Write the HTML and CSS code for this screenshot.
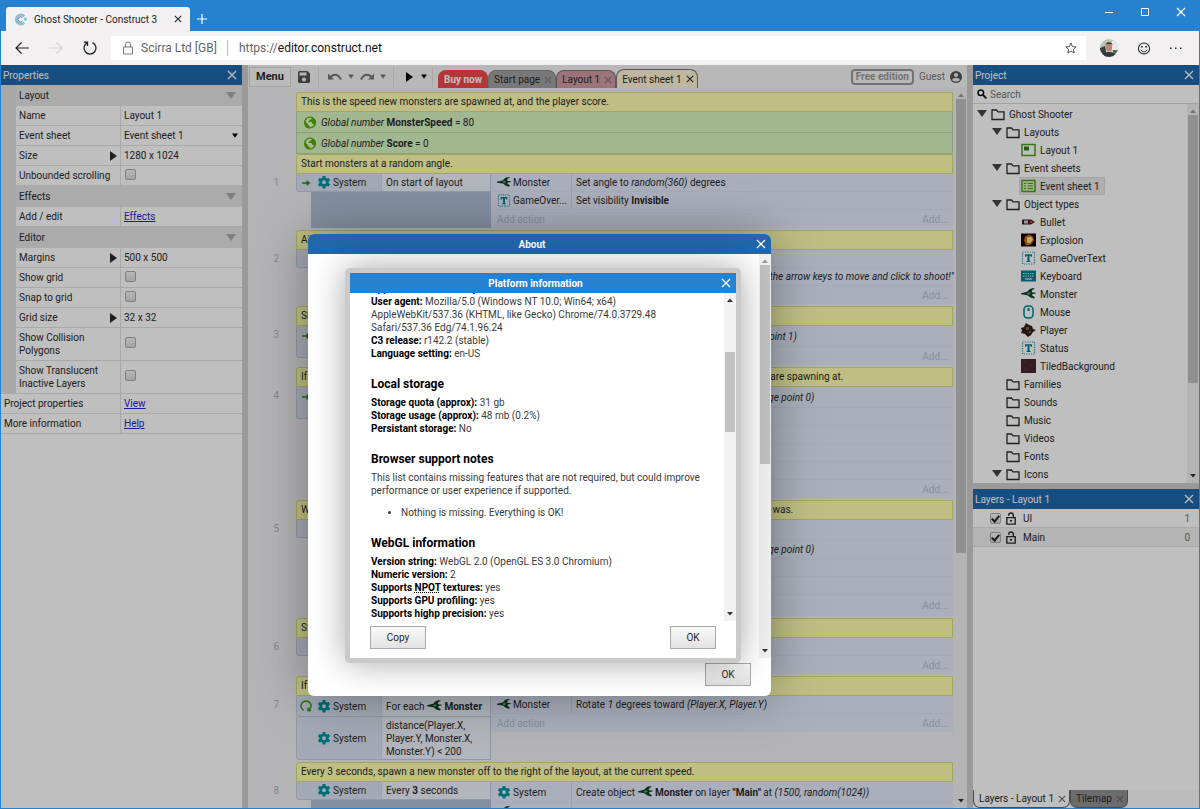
FILE: index.html
```html
<!DOCTYPE html>
<html lang="en">
<head>
  <meta charset="UTF-8" />
  <meta name="viewport" content="width=device-width, initial-scale=1.0" />
  <title>Ghost Shooter - Construct 3</title>
  <link rel="stylesheet" href="styles.css">
</head>

<body>

  <!-- Icon sprites -->
  <svg class="sprites" aria-hidden="true">
    <symbol id="i-x" viewBox="0 0 10 10"><path d="M1 1l8 8M9 1l-8 8" stroke="currentColor" stroke-width="1.3" fill="none"/></symbol>
    <symbol id="i-up" viewBox="0 0 8 8"><path d="M1 6l3-3.5L7 6z" fill="currentColor"/></symbol>
    <symbol id="i-down" viewBox="0 0 8 8"><path d="M1 2l3 3.5L7 2z" fill="currentColor"/></symbol>
    <symbol id="i-tri" viewBox="0 0 10 10"><path d="M0 1h10L5 8z" fill="currentColor"/></symbol>
    <symbol id="i-right" viewBox="0 0 10 10"><path d="M2 0v10l7-5z" fill="currentColor"/></symbol>
    <symbol id="i-gear" viewBox="0 0 24 24"><path fill="#00939f" fill-rule="evenodd" d="M9.500 0h5l.6 3.400 2.300 1.300 3.300-1.200 2.500 4.400-2.700 2.200v2.800l2.700 2.200-2.500 4.400-3.300-1.200-2.300 1.300-.6 3.400h-5l-.6-3.400-2.300-1.300-3.300 1.200L.8 15.100l2.700-2.200v-2.800L.8 7.900l2.500-4.400 3.300 1.200 2.300-1.300zM12 7.800a3.700 3.700 0 1 0 0 7.400 3.700 3.700 0 0 0 0-7.400z"/></symbol>
    <symbol id="i-text" viewBox="0 0 14 14"><rect x="1" y="1" width="12" height="12" fill="none" stroke="#2b94a8" stroke-width="1.2" stroke-dasharray="1.2 1.2"/><path d="M3.500 3.200h7v2.600H9.400L9 4.800H8v5l1 .3v.9H5v-.9l1-.3v-5H5l-.4 1H3.500z" fill="#00808f"/></symbol>
    <symbol id="i-monster" viewBox="0 0 15 12"><path d="M0 5.200L6 3.800l3-2.800 3-1 2 1-2.500.8-.8 1.700 1 1h2.800v1l-2.800.5-.8 1.200 3 2-1 1.300-3.500-1-3-2.300-6.400-1z" fill="#123f24"/><path d="M6 5l2.500-.8 1.300 1.300-1.600 1.300-2.200-.6z" fill="#4aa866"/></symbol>
    <symbol id="i-globe" viewBox="0 0 24 24"><circle cx="12" cy="12" r="10" fill="#e2f8cc" stroke="#54ad00" stroke-width="2.500"/><path fill="#54ad00" d="M2.500 9l6 6v2l3 2v4C5 22.500 1 17 2.500 9zM15 2.500V5l-2 2h-2v2H9v2h6l1 3.500h2.500l1.500 3C24 13 23.500 5 15 2.500z"/></symbol>
    <symbol id="i-arrow" viewBox="0 0 12 10"><path d="M2 5h6" stroke="#2e8c14" stroke-width="1.500"/><path d="M6.500 2L10.500 5l-4 3z" fill="#2e8c14"/></symbol>
    <symbol id="i-loop" viewBox="0 0 12 12"><path d="M3.600 10.300A5 5 0 1 1 8.400 10.300M8 7.500v3h3" fill="none" stroke="#2e9a14" stroke-width="1.500"/></symbol>
    <symbol id="i-folder" viewBox="0 0 14 12"><path d="M1 1.500h4.500l1.500 1.800h6v7.700H1z" fill="none" stroke="currentColor" stroke-width="1.300"/></symbol>
    <symbol id="i-lock" viewBox="0 0 12 14"><path d="M1.500 6h9v7h-9zM3.500 4V3.500a2.500 2.500 0 0 1 5 0V6" fill="none" stroke="currentColor" stroke-width="1.500"/><circle cx="6" cy="9.500" r="1.200" fill="currentColor"/></symbol>
  </svg>

  <!-- Browser title bar -->
  <header class="titlebar">
    <div class="browser-tab">
      <svg class="fav" viewBox="0 0 14 14"><path d="M11 3.500A5 5 0 1 0 11 10.500" fill="none" stroke="#8bbfd8" stroke-width="3"/><path d="M9 5a2.800 2.800 0 1 0 0 4" fill="none" stroke="#56718a" stroke-width="1"/><path d="M11 5h2.500v3H11z" fill="#4fd0d8"/></svg>
      <span>Ghost Shooter - Construct 3</span>
      <button class="icon-btn" aria-label="Close tab"><svg class="ic8"><use href="#i-x"/></svg></button>
    </div>
    <button class="icon-btn new-tab" aria-label="New tab"><svg viewBox="0 0 12 12"><path d="M6 1v10M1 6h10" stroke="currentColor" stroke-width="1.200"/></svg></button>
    <div class="window-btns">
      <button class="icon-btn" aria-label="Minimise"><svg class="ic10" viewBox="0 0 10 10"><path d="M1 5.500h8" stroke="currentColor"/></svg></button>
      <button class="icon-btn" aria-label="Maximise"><svg class="ic10" viewBox="0 0 10 10"><path d="M1.500 1.500h7v7h-7z" fill="none" stroke="currentColor"/></svg></button>
      <button class="icon-btn" aria-label="Close"><svg class="ic10"><use href="#i-x"/></svg></button>
    </div>
  </header>

  <!-- Address bar -->
  <nav class="navbar">
    <div class="nav-btns">
      <button class="icon-btn" aria-label="Back"><svg viewBox="0 0 16 16"><path d="M15 8H2M7.500 2.500L2 8l5.500 5.500" fill="none" stroke="#222" stroke-width="1.200"/></svg></button>
      <button class="icon-btn" aria-label="Forward"><svg viewBox="0 0 16 16"><path d="M1 8h13M8.500 2.500L14 8l-5.500 5.500" fill="none" stroke="#d3d1d1" stroke-width="1.200"/></svg></button>
      <button class="icon-btn" aria-label="Reload"><svg viewBox="0 0 16 16"><path d="M10.500 2.600a6 6 0 1 1-5 0M5.500 6V2.200H2" fill="none" stroke="#222" stroke-width="1.300"/></svg></button>
    </div>
    <div class="address">
      <svg class="padlock" viewBox="0 0 12 14"><path d="M1.500 6h9v7h-9zM3.500 6V3.500a2.500 2.500 0 0 1 5 0V6" fill="none" stroke="#777" stroke-width="1"/></svg>
      <span class="owner">Scirra Ltd [GB]</span>
      <label class="scheme" for="url">https://</label>
      <input id="url" type="text" value="editor.construct.net">
      <button class="icon-btn" aria-label="Favourite"><svg class="ic12" viewBox="0 0 24 24"><path d="M12 2l3 7.200 7.500.6-5.800 4.900 1.800 7.400L12 18l-6.500 4.100 1.800-7.400L1.500 9.800 9 9.200z" fill="none" stroke="#444" stroke-width="1.800"/></svg></button>
    </div>
    <div class="nav-user">
      <svg class="avatar" viewBox="0 0 18 18"><clipPath id="round"><circle cx="9" cy="9" r="9"/></clipPath><g clip-path="url(#round)"><path fill="#b9c6b5" d="M0 0h18v18H0z"/><path fill="#3a4038" d="M0 9l5-2 2 11H0z"/><path fill="#e9e9e6" d="M12 2h6v9h-6z"/><path fill="#5b6a58" d="M13 11h5v7h-5z"/><path fill="#30353d" d="M3 18c0-4 3-5 6-5s6 1 6 5z"/><ellipse cx="9" cy="8" rx="3" ry="4.300" fill="#bd8672"/><path fill="#3b2a20" d="M5.500 7C5 2 13 2 12.500 7l-1-2h-5z"/></g></svg>
      <button class="icon-btn" aria-label="Feedback"><svg class="ic14" viewBox="0 0 14 14"><circle cx="7" cy="7" r="6" fill="none" stroke="#222" stroke-width="1.100"/><path d="M3.800 8.300a3.400 3.400 0 0 0 6.400 0" fill="none" stroke="#222"/><circle cx="4.800" cy="5.200" r=".9"/><circle cx="9.200" cy="5.200" r=".9"/></svg></button>
      <button class="icon-btn" aria-label="More"><svg class="ic12" viewBox="0 0 12 12"><path d="M0 5.500h1.500V7H0zM5 5.500h1.500V7H5zM10 5.500h1.500V7H10z" fill="#222"/></svg></button>
    </div>
  </nav>

  <!-- Editor -->
  <main class="app">

    <!-- Properties -->
    <aside class="props">
      <div class="bar"><span>Properties</span><button class="icon-btn" aria-label="Close Properties"><svg class="ic10"><use href="#i-x"/></svg></button></div>
      <div class="prop-list">
        <div class="group"><span>Layout</span><svg class="ic10"><use href="#i-tri"/></svg></div>
        <div class="prop"><span class="key">Name</span><span class="val">Layout 1</span></div>
        <div class="prop"><label class="key" for="sheet">Event sheet</label><span class="val"><select id="sheet"><option>Event sheet 1</option></select><svg class="caret"><use href="#i-tri"/></svg></span></div>
        <div class="prop"><span class="key">Size<svg class="ic10"><use href="#i-right"/></svg></span><span class="val">1280 x 1024</span></div>
        <div class="prop"><label class="key" for="unb">Unbounded scrolling</label><span class="val"><input type="checkbox" id="unb"></span></div>
        <div class="group"><span>Effects</span><svg class="ic10"><use href="#i-tri"/></svg></div>
        <div class="prop"><span class="key">Add / edit</span><span class="val"><a href="#">Effects</a></span></div>
        <div class="group"><span>Editor</span><svg class="ic10"><use href="#i-tri"/></svg></div>
        <div class="prop"><span class="key">Margins<svg class="ic10"><use href="#i-right"/></svg></span><span class="val">500 x 500</span></div>
        <div class="prop"><label class="key" for="grid">Show grid</label><span class="val"><input type="checkbox" id="grid"></span></div>
        <div class="prop"><label class="key" for="snap">Snap to grid</label><span class="val"><input type="checkbox" id="snap"></span></div>
        <div class="prop"><span class="key">Grid size<svg class="ic10"><use href="#i-right"/></svg></span><span class="val">32 x 32</span></div>
        <div class="prop tall"><label class="key" for="coll">Show Collision<br>Polygons</label><span class="val"><input type="checkbox" id="coll"></span></div>
        <div class="prop tall"><label class="key" for="trans">Show Translucent<br>Inactive Layers</label><span class="val"><input type="checkbox" id="trans"></span></div>
      </div>
      <div class="prop root"><span class="key">Project properties</span><span class="val"><a href="#">View</a></span></div>
      <div class="prop root"><span class="key">More information</span><span class="val"><a href="#">Help</a></span></div>
    </aside>

    <!-- Event sheet -->
    <section class="editor">
      <div class="toolbar">
        <button class="menu">Menu</button>
        <button class="icon-btn save" aria-label="Save"><svg class="ic12" viewBox="0 0 12 12"><path fill="currentColor" fill-rule="evenodd" d="M0 1l1-1h8.500L12 2.500V11l-1 1H1l-1-1zM1.500 1.500v3h7v-3zM6 6.500a2 2 0 1 0 0 4 2 2 0 0 0 0-4z"/></svg></button>
        <div class="history">
          <button class="icon-btn" aria-label="Undo"><svg class="ic14" viewBox="0 0 14 10"><path d="M2.500 6C5 2 10 2 13 8" fill="none" stroke="currentColor" stroke-width="2"/><path d="M0 2v6h6z" fill="currentColor"/></svg></button>
          <button class="icon-btn" aria-label="Undo list"><svg class="ic6"><use href="#i-tri"/></svg></button>
          <button class="icon-btn" aria-label="Redo"><svg class="ic14" viewBox="0 0 14 10"><path d="M11.500 6C9 2 4 2 1 8" fill="none" stroke="currentColor" stroke-width="2"/><path d="M14 2v6H8z" fill="currentColor"/></svg></button>
          <button class="icon-btn" aria-label="Redo list"><svg class="ic6"><use href="#i-tri"/></svg></button>
        </div>
        <div class="play">
          <button class="icon-btn" aria-label="Preview"><svg class="ic10"><use href="#i-right"/></svg></button>
          <button class="icon-btn" aria-label="Preview list"><svg class="ic6"><use href="#i-tri"/></svg></button>
        </div>
        <div class="tabs">
          <button class="tab buy">Buy now</button>
          <button class="tab start">Start page<svg class="ic8"><use href="#i-x"/></svg></button>
          <button class="tab layout">Layout 1<svg class="ic8"><use href="#i-x"/></svg></button>
          <button class="tab sheet">Event sheet 1<svg class="ic8"><use href="#i-x"/></svg></button>
        </div>
        <div class="account">
          <span class="edition">Free edition</span><span>Guest</span>
          <svg class="ic12" viewBox="0 0 12 12"><circle cx="6" cy="6" r="6" fill="#555"/><circle cx="6" cy="4" r="2" fill="#eee"/><path d="M2 9c1-3 7-3 8 0-2 2.200-6 2.200-8 0z" fill="#eee"/></svg>
        </div>
      </div>

      <div class="sheet-wrap">
        <div class="events">
          <div class="comment">This is the speed new monsters are spawned at, and the player score.</div>
          <div class="global"><svg class="ic14"><use href="#i-globe"/></svg><span><i>Global number</i> <b>MonsterSpeed</b> = 80</span></div>
          <div class="global"><svg class="ic14"><use href="#i-globe"/></svg><span><i>Global number</i> <b>Score</b> = 0</span></div>

          <div class="comment">Start monsters at a random angle.</div>
          <div class="event">
            <span class="num">1</span>
            <div class="conds">
              <div class="cond"><span class="obj"><svg class="trig"><use href="#i-arrow"/></svg><svg class="ic14"><use href="#i-gear"/></svg>System</span><span class="txt">On start of layout</span></div>
              <div class="fill"></div>
            </div>
            <div class="acts">
              <div class="act"><span class="obj"><svg class="ic14"><use href="#i-monster"/></svg>Monster</span><span class="txt">Set angle to <i>random(360)</i> degrees</span></div>
              <div class="act"><span class="obj"><svg class="ic14"><use href="#i-text"/></svg>GameOver...</span><span class="txt">Set visibility <b>Invisible</b></span></div>
              <div class="add"><span>Add action</span><span>Add...</span></div>
            </div>
          </div>

          <div class="comment">Aim.</div>
          <div class="event">
            <span class="num">2</span>
            <div class="conds">
              <div class="cond"><span class="obj"></span><span class="txt"></span></div>
              <div class="fill"></div>
            </div>
            <div class="acts">
              <div class="act"><span class="obj"></span><span class="txt"></span></div>
              <div class="act"><span class="obj"></span><span class="txt">Set text to <i>"Score " &amp; Score &amp; newline &amp; "Use the arrow keys to move and click to shoot!"</i></span></div>
              <div class="add"><span></span><span>Add...</span></div>
            </div>
          </div>

          <div class="comment">Shoot.</div>
          <div class="event">
            <span class="num">3</span>
            <div class="conds">
              <div class="cond tail"><span class="obj"><svg class="trig"><use href="#i-arrow"/></svg></span><span class="txt"></span></div>
            </div>
            <div class="acts">
              <div class="act big"><span class="obj"></span><span class="txt">Spawn <b>Bullet</b> on layer <b>"Main"</b> <i>(using image point 1)</i></span></div>
              <div class="add"><span></span><span>Add...</span></div>
            </div>
          </div>

          <div class="comment">If a bullet hits a monster, destroy the bullet, spawn an explosion, add to score and increase the speed they are spawning at.</div>
          <div class="event">
            <span class="num">4</span>
            <div class="conds">
              <div class="cond tail"><span class="obj"><svg class="trig"><use href="#i-arrow"/></svg></span><span class="txt"></span></div>
              <div class="fill"></div>
            </div>
            <div class="acts">
              <div class="act big"><span class="obj"></span><span class="txt">Spawn <b>Explosion</b> on layer <b>"Main"</b> <i>(using image point 0)</i></span></div>
              <div class="act"><span class="obj"></span><span class="txt"></span></div>
              <div class="act"><span class="obj"></span><span class="txt"></span></div>
              <div class="act"><span class="obj"></span><span class="txt"></span></div>
              <div class="act"><span class="obj"></span><span class="txt"></span></div>
              <div class="add"><span></span><span>Add...</span></div>
            </div>
          </div>

          <div class="comment">When the player is hit by a monster, show the game over text where the player was on screen, state what it was.</div>
          <div class="event">
            <span class="num">5</span>
            <div class="conds">
              <div class="cond"><span class="obj"></span><span class="txt"></span></div>
              <div class="fill"></div>
            </div>
            <div class="acts">
              <div class="act big"><span class="obj"></span><span class="txt"></span></div>
              <div class="act"><span class="obj"></span><span class="txt">Spawn <b>Explosion</b> on layer <b>"Main"</b> <i>(using image point 0)</i></span></div>
              <div class="act"><span class="obj"></span><span class="txt"></span></div>
              <div class="act"><span class="obj"></span><span class="txt"></span></div>
              <div class="add big"><span></span><span>Add...</span></div>
            </div>
          </div>

          <div class="comment">Steer.</div>
          <div class="event">
            <span class="num">6</span>
            <div class="conds">
              <div class="cond"><span class="obj"></span><span class="txt"></span></div>
              <div class="fill"></div>
            </div>
            <div class="acts">
              <div class="act"><span class="obj"></span><span class="txt"></span></div>
              <div class="add"><span></span><span>Add...</span></div>
            </div>
          </div>

          <div class="comment">If near, turn.</div>
          <div class="event">
            <span class="num">7</span>
            <div class="conds">
              <div class="cond big"><span class="obj"><svg class="trig"><use href="#i-loop"/></svg><svg class="ic14"><use href="#i-gear"/></svg>System</span><span class="txt">For each <svg class="inline"><use href="#i-monster"/></svg> <b>Monster</b></span></div>
              <div class="cond multi"><span class="obj"><svg class="trig"></svg><svg class="ic14"><use href="#i-gear"/></svg>System</span><span class="txt">distance(Player.X,<br>Player.Y, Monster.X,<br>Monster.Y) &lt; 200</span></div>
            </div>
            <div class="acts">
              <div class="act"><span class="obj"><svg class="ic14"><use href="#i-monster"/></svg>Monster</span><span class="txt">Rotate <i>1</i> degrees toward <i>(Player.X, Player.Y)</i></span></div>
              <div class="add"><span>Add action</span><span>Add...</span></div>
            </div>
          </div>

          <div class="comment">Every 3 seconds, spawn a new monster off to the right of the layout, at the current speed.</div>
          <div class="event">
            <span class="num">8</span>
            <div class="conds">
              <div class="cond"><span class="obj"><svg class="trig"></svg><svg class="ic14"><use href="#i-gear"/></svg>System</span><span class="txt">Every <b>3</b> seconds</span></div>
              <div class="fill"></div>
            </div>
            <div class="acts">
              <div class="act big"><span class="obj"><svg class="ic14"><use href="#i-gear"/></svg>System</span><span class="txt">Create object <svg class="inline"><use href="#i-monster"/></svg> <b>Monster</b> on layer <b>"Main"</b> at <i>(1500, random(1024))</i></span></div>
              <div class="act"><span class="obj"><svg class="ic14"><use href="#i-monster"/></svg></span><span class="txt"></span></div>
            </div>
          </div>
        </div>
        <div class="scrollbar"><svg class="ic8 off"><use href="#i-up"/></svg><div class="track"><div class="thumb sheet-thumb"></div></div><svg class="ic8"><use href="#i-down"/></svg></div>
      </div>
    </section>

    <!-- Project and layers -->
    <aside class="right">
      <div class="bar"><span>Project</span><button class="icon-btn" aria-label="Close Project"><svg class="ic10"><use href="#i-x"/></svg></button></div>
      <div class="search">
        <label for="q" aria-label="Search"><svg class="ic10" viewBox="0 0 10 10"><circle cx="3.800" cy="3.800" r="2.800" fill="none" stroke="#111" stroke-width="1.500"/><path d="M6 6l3.500 3.500" stroke="#111" stroke-width="1.800"/></svg></label>
        <input id="q" type="text" placeholder="Search">
      </div>
      <div class="tree-wrap">
        <ul class="tree">
          <li><svg class="ic10"><use href="#i-tri"/></svg><svg class="ic14"><use href="#i-folder"/></svg>Ghost Shooter</li>
          <li class="l1"><svg class="ic10"><use href="#i-tri"/></svg><svg class="ic14"><use href="#i-folder"/></svg>Layouts</li>
          <li class="l2"><svg class="ic15" viewBox="0 0 15 13"><path d="M1 1h13v11H1z" fill="none" stroke="#4f9a20" stroke-width="1.500"/><path d="M3 3h5v4H3z" fill="#347a18"/></svg>Layout 1</li>
          <li class="l1"><svg class="ic10"><use href="#i-tri"/></svg><svg class="ic14"><use href="#i-folder"/></svg>Event sheets</li>
          <li class="l2 active"><svg class="ic15" viewBox="0 0 15 13"><path d="M1 1h13v11H1z" fill="#d5efb8" stroke="#4f9a20" stroke-width="1.500"/><path d="M3 4h2M3 6.500h2M3 9h2M6.500 4H12M6.500 6.500H12M6.500 9H12" stroke="#4f9a20" stroke-width="1.200"/></svg>Event sheet 1</li>
          <li class="l1"><svg class="ic10"><use href="#i-tri"/></svg><svg class="ic14"><use href="#i-folder"/></svg>Object types</li>
          <li class="l2"><svg class="ic15" viewBox="0 0 15 13"><path d="M1 4h9l4 2.500L10 9H1z" fill="#3b2222"/><path d="M3 5h4v3H3z" fill="#c9c9c9"/><path d="M9 5l3 1.500L9 8z" fill="#d8502a"/></svg>Bullet</li>
          <li class="l2"><svg class="ic15" viewBox="0 0 15 13"><path d="M0 0h15v13H0z" fill="#120600"/><path d="M3 7l1-4 4-2 4 2 1 4-3 4-5 1z" fill="#c4690f"/><path d="M6 4l4-1 2 3-3 4-3-1z" fill="#ffdf8c"/></svg>Explosion</li>
          <li class="l2"><svg class="ic15"><use href="#i-text"/></svg>GameOverText</li>
          <li class="l2"><svg class="ic15" viewBox="0 0 15 13"><path d="M0 1h15v11H0z" fill="#00808f"/><path d="M2 4h11M2 6.500h11" stroke="#cdeef2" stroke-width="1.200" stroke-dasharray="1.300 1"/><path d="M4 9.500h7" stroke="#cdeef2" stroke-width="1.200"/></svg>Keyboard</li>
          <li class="l2"><svg class="ic15"><use href="#i-monster"/></svg>Monster</li>
          <li class="l2"><svg class="ic15" viewBox="0 0 15 14"><rect x="3" y="1" width="9" height="12" rx="3.500" fill="none" stroke="#00808f" stroke-width="1.500"/><path d="M7.500 3v3" stroke="#00808f" stroke-width="2"/></svg>Mouse</li>
          <li class="l2"><svg class="ic15" viewBox="0 0 15 14"><path d="M0 5l3-1 2-4 3 2 3 1 1 3 3 1-3 2-2 3-3 2-3-3-4-1 1-2z" fill="#33201a"/><path d="M5 4h3v3H5zM8 8h2v2H8z" fill="#8a5a48"/></svg>Player</li>
          <li class="l2"><svg class="ic15"><use href="#i-text"/></svg>Status</li>
          <li class="l2"><svg class="ic15" viewBox="0 0 15 14"><path d="M0 0h15v14H0z" fill="#47262f"/><path d="M2 3h3M8 6h4M3 11h5" stroke="#5b343d"/></svg>TiledBackground</li>
          <li class="l1"><svg class="ic10"></svg><svg class="ic14"><use href="#i-folder"/></svg>Families</li>
          <li class="l1"><svg class="ic10"></svg><svg class="ic14"><use href="#i-folder"/></svg>Sounds</li>
          <li class="l1"><svg class="ic10"></svg><svg class="ic14"><use href="#i-folder"/></svg>Music</li>
          <li class="l1"><svg class="ic10"></svg><svg class="ic14"><use href="#i-folder"/></svg>Videos</li>
          <li class="l1"><svg class="ic10"></svg><svg class="ic14"><use href="#i-folder"/></svg>Fonts</li>
          <li class="l1"><svg class="ic10"><use href="#i-tri"/></svg><svg class="ic14"><use href="#i-folder"/></svg>Icons</li>
        </ul>
        <div class="scrollbar"><svg class="ic8 off"><use href="#i-up"/></svg><div class="track"><div class="thumb tree-thumb"></div></div><svg class="ic8"><use href="#i-down"/></svg></div>
      </div>
      <div class="split"></div>
      <div class="bar"><span>Layers - Layout 1</span><button class="icon-btn" aria-label="Close Layers"><svg class="ic10"><use href="#i-x"/></svg></button></div>
      <div class="layer"><input type="checkbox" id="ui" checked><svg class="ic14"><use href="#i-lock"/></svg><label for="ui">UI</label><span>1</span></div>
      <div class="layer alt"><input type="checkbox" id="main" checked><svg class="ic14"><use href="#i-lock"/></svg><label for="main">Main</label><span>0</span></div>
      <div class="dock-tabs">
        <button class="dock on">Layers - Layout 1<svg class="ic8"><use href="#i-x"/></svg></button>
        <button class="dock">Tilemap<svg class="ic8"><use href="#i-x"/></svg></button>
      </div>
    </aside>

    <div class="backdrop"></div>

    <!-- About dialog -->
    <div class="about" role="dialog" aria-label="About">
      <div class="bar dlg"><span>About</span><button class="icon-btn" aria-label="Close About"><svg class="ic10"><use href="#i-x"/></svg></button></div>
      <div class="about-body">
        <div class="scrollbar"><svg class="ic8 off"><use href="#i-up"/></svg><div class="track"><div class="thumb about-thumb"></div></div><svg class="ic8"><use href="#i-down"/></svg></div>
      </div>
      <div class="about-foot"><button class="btn">OK</button></div>

      <!-- Platform information dialog -->
      <div class="platform" role="dialog" aria-label="Platform information">
        <div class="bar dlg"><span>Platform information</span><button class="icon-btn" aria-label="Close Platform information"><svg class="ic10"><use href="#i-x"/></svg></button></div>
        <div class="platform-body">
          <div class="info">
            <p class="scrolled"><b>Approx. device memory:</b></p>
            <p><b>User agent:</b> Mozilla/5.0 (Windows NT 10.0; Win64; x64)<br>AppleWebKit/537.36 (KHTML, like Gecko) Chrome/74.0.3729.48<br>Safari/537.36 Edg/74.1.96.24</p>
            <p><b>C3 release:</b> r142.2 (stable)</p>
            <p><b>Language setting:</b> en-US</p>
            <h2>Local storage</h2>
            <p><b>Storage quota (approx):</b> 31 gb</p>
            <p><b>Storage usage (approx):</b> 48 mb (0.2%)</p>
            <p><b>Persistant storage:</b> No</p>
            <h2>Browser support notes</h2>
            <p>This list contains missing features that are not required, but could improve<br>performance or user experience if supported.</p>
            <ul><li>Nothing is missing. Everything is OK!</li></ul>
            <h2>WebGL information</h2>
            <p><b>Version string:</b> WebGL 2.0 (OpenGL ES 3.0 Chromium)</p>
            <p><b>Numeric version:</b> 2</p>
            <p><b>Supports <abbr title="Non-power-of-two">NPOT</abbr> textures:</b> yes</p>
            <p><b>Supports GPU profiling:</b> yes</p>
            <p><b>Supports highp precision:</b> yes</p>
          </div>
          <div class="scrollbar"><svg class="ic8"><use href="#i-up"/></svg><div class="track"><div class="thumb info-thumb"></div></div><svg class="ic8"><use href="#i-down"/></svg></div>
        </div>
        <div class="platform-foot"><button class="btn wide">Copy</button><button class="btn">OK</button></div>
      </div>
    </div>

  </main>

</body>
</html>
```

FILE: styles.css
```css
* {
  box-sizing: border-box;
}

body {
  margin: 0;
  height: 100vh;
  display: flex;
  flex-direction: column;
  overflow: hidden;
  border: 1px solid #2681d0;
  border-top: 0;
  font-family: Roboto, "Open Sans", sans-serif;
  font-size: 10px;
  line-height: 13px;
  color: #2a2a2a;
  background: #fff;
}

button, input, select {
  font: inherit;
  color: inherit;
  margin: 0;
}

svg {
  flex: none;
}

.sprites {
  position: absolute;
  width: 0;
  height: 0;
}

.icon-btn {
  display: flex;
  align-items: center;
  justify-content: center;
  padding: 0;
  border: 0;
  background: none;
}

.ic6 { width: 6px; height: 6px; }
.ic8 { width: 8px; height: 8px; }
.ic10 { width: 10px; height: 10px; }
.ic12 { width: 12px; height: 12px; }
.ic14 { width: 14px; height: 13px; }
.ic15 { width: 15px; height: 14px; }

/* browser chrome */
.titlebar {
  flex: none;
  display: flex;
  align-items: flex-end;
  height: 31px;
  padding-left: 5px;
  background: #2681d0;
  color: #fff;
}

.browser-tab {
  display: flex;
  align-items: center;
  gap: 7px;
  width: 184px;
  height: 24px;
  padding: 0 8px;
  border-radius: 3px 3px 0 0;
  background: #f2f0f0;
  color: #222;
}

.browser-tab span {
  flex: 1;
}

.fav {
  width: 13px;
  height: 13px;
}

.new-tab {
  width: 24px;
  height: 24px;
}

.new-tab svg {
  width: 12px;
  height: 12px;
}

.window-btns {
  display: flex;
  align-self: flex-start;
  margin-left: auto;
}

.window-btns button {
  width: 36px;
  height: 24px;
}

.navbar {
  flex: none;
  display: flex;
  align-items: center;
  height: 34px;
  background: #f2f0f0;
}

.nav-btns {
  display: flex;
  width: 110px;
  padding-left: 13px;
  gap: 18px;
}

.nav-btns svg {
  width: 16px;
  height: 16px;
}

.address {
  flex: 1;
  display: flex;
  align-items: center;
  height: 24px;
  padding: 0 9px 0 11px;
  background: #fff;
  font-size: 12px;
  line-height: 16px;
}

.padlock {
  width: 12px;
  height: 14px;
  margin-right: 7px;
}

.owner {
  padding-right: 10px;
  margin-right: 11px;
  border-right: 1px solid #bbb;
  color: #666;
}

.scheme {
  color: #666;
}

.address input {
  flex: 1;
  padding: 0;
  border: 0;
  background: none;
  color: #111;
}

.nav-user {
  display: flex;
  align-items: center;
  gap: 19px;
  padding: 0 17px 0 14px;
}

.avatar {
  width: 18px;
  height: 18px;
}

/* editor frame */
.app {
  position: relative;
  flex: 1;
  display: flex;
  min-height: 0;
  background: #fff;
}

.bar {
  flex: none;
  display: flex;
  align-items: center;
  justify-content: space-between;
  height: 20px;
  padding: 0 5px 0 2px;
  background: #2068aa;
  color: #fff;
}

.scrollbar {
  flex: none;
  display: flex;
  flex-direction: column;
  align-items: center;
  width: 12px;
  padding: 3px 0;
  background: #f1f1f1;
  color: #333;
}

.off {
  color: #999;
}

.track {
  flex: 1;
  align-self: stretch;
  padding: 0 1px;
}

.thumb {
  background: #c1c1c1;
}

.sheet-thumb { height: 65%; }
.tree-thumb { height: 75%; }
.about-thumb { height: 52%; }
.info-thumb { height: 26%; margin-top: 48px; }

/* properties */
.props {
  flex: none;
  width: 247px;
  border-right: 6px solid #cecece;
}

.prop-list {
  padding-left: 15px;
  background: #e0e0e0;
}

.group {
  display: flex;
  align-items: center;
  justify-content: space-between;
  height: 21px;
  padding: 0 6px 0 3px;
  background: #e4e4e4;
}

.group svg {
  color: #aaa;
}

.prop {
  display: flex;
  height: 20px;
  border-bottom: 1px solid #e2e2e2;
  background: #fff;
}

.prop.tall {
  height: 33px;
}

.key {
  flex: none;
  display: flex;
  align-items: center;
  justify-content: space-between;
  width: 105px;
  padding: 0 2px 0 3px;
  border-right: 1px solid #e2e2e2;
}

.root .key {
  width: 120px;
}

.val {
  flex: 1;
  display: flex;
  align-items: center;
  padding-left: 3px;
}

.val select {
  flex: 1;
  padding: 0;
  border: 0;
  appearance: none;
  background: none;
}

.caret {
  width: 6px;
  height: 6px;
  margin-right: 4px;
  color: #000;
}

input[type="checkbox"] {
  appearance: none;
  width: 11px;
  height: 11px;
  border: 1px solid #aaa;
  border-radius: 2px;
  background: linear-gradient(#f4f4f4, #dcdcdc);
}

.val input[type="checkbox"] {
  margin: 0 0 3px 1px;
}

.layer input[type="checkbox"]:checked::before {
  content: "";
  display: block;
  width: 3px;
  height: 6px;
  margin: 0 auto;
  border: solid #222;
  border-width: 0 2px 2px 0;
  transform: rotate(40deg);
}

.val a {
  color: #2a1fd0;
}

/* event sheet */
.editor {
  flex: 1;
  display: flex;
  flex-direction: column;
  min-width: 0;
  background: #f1f0f4;
}

.toolbar {
  flex: none;
  display: flex;
  align-items: center;
  height: 23px;
  padding: 0 5px 0 1px;
  background: #f6f6f6;
}

.menu {
  width: 42px;
  height: 20px;
  padding: 0;
  border: 1px solid #d8d8d8;
  background: #fafafa;
  font-weight: bold;
  font-size: 11px;
}

.save {
  padding: 0 8px 0 7px;
  color: #555;
}

.history, .play {
  display: flex;
  align-items: center;
  height: 20px;
  border-left: 1px solid #e0e0e0;
}

.history {
  gap: 6px;
  padding: 0 7px 0 9px;
  color: #777;
}

.play {
  gap: 7px;
  padding: 0 5px 0 10px;
  margin-right: 5px;
  border-right: 1px solid #e0e0e0;
  color: #000;
}

.tabs {
  flex: 1;
  display: flex;
  align-items: flex-end;
  align-self: stretch;
}

.tab {
  display: flex;
  align-items: center;
  gap: 4px;
  height: 18px;
  padding: 0 3px 0 5px;
  border: 1px solid #777;
  border-bottom: 0;
  border-radius: 8px 8px 0 0;
  white-space: nowrap;
}

.tab.buy {
  padding: 0 5px;
  border-color: #f24848;
  background: #f24848;
  color: #fff;
  font-weight: bold;
}

.tab.start {
  background: #a0a0a0;
  border-color: #888;
}

.tab.layout {
  background: #d09aa2;
}

.tab.sheet {
  height: 19px;
  background: #fff3d4;
}

.tab.start svg, .tab.layout svg {
  color: #777;
}

.account {
  display: flex;
  align-items: center;
  gap: 5px;
  color: #777;
}

.edition {
  padding: 0 3px;
  border: 2px solid #999;
  border-radius: 4px;
  font-weight: bold;
  line-height: 12px;
  color: #999;
}

.sheet-wrap {
  flex: 1;
  display: flex;
  min-height: 0;
}

.events {
  flex: 1;
  min-width: 0;
  padding: 4px 2px 0 48px;
  overflow: hidden;
}

.comment {
  height: 20px;
  padding: 2px 4px;
  border: 1px solid #dcdc80;
  border-radius: 3px 0 0 0;
  background: #ffffb1;
  line-height: 14px;
  white-space: nowrap;
}

.global {
  display: flex;
  align-items: center;
  gap: 4px;
  height: 21px;
  padding-left: 6px;
  border: 1px solid #b8d8a4;
  border-top: 0;
  background: #d7f4bf;
}

.event {
  position: relative;
  display: flex;
  margin-bottom: 2px;
}

.num {
  position: absolute;
  right: calc(100% + 17px);
  top: 2px;
  color: #b4b4b8;
}

.conds {
  flex: none;
  display: flex;
  flex-direction: column;
  width: 195px;
}

.cond, .act {
  display: flex;
  height: 18px;
}

.cond {
  border: 1px solid #c2ccdc;
  border-top: 0;
  border-radius: 0 0 0 3px;
  background: #dbe3f2;
}

.cond.tail {
  height: 32px;
}

.tail .obj {
  align-items: flex-start;
  padding-top: 4px;
}

.obj {
  flex: none;
  display: flex;
  align-items: center;
  gap: 2px;
  width: 84px;
  padding-left: 3px;
}

.cond .txt {
  background: #eef2fa;
  border-left: 1px solid #d0d8e6;
}

.trig {
  width: 12px;
  height: 12px;
  margin-right: 3px;
}

.txt {
  flex: 1;
  padding-left: 4px;
  align-self: stretch;
  align-content: center;
  white-space: nowrap;
}

.inline {
  width: 15px;
  height: 12px;
  vertical-align: -2px;
}

.fill {
  flex: 1;
  margin-left: 15px;
  background: #b1c1d8;
}

.acts {
  flex: 1;
  align-self: flex-start;
  min-width: 0;
  background: #e3eafa;
}

.act {
  border-bottom: 1px solid #dbe3f4;
}

.act .obj {
  width: 81px;
  padding-left: 6px;
  border-right: 1px solid #d0d8e6;
}

.add {
  display: flex;
  justify-content: space-between;
  align-items: center;
  height: 18px;
  padding: 0 5px 0 6px;
  color: #b8c0d0;
}

.cond.big, .act.big, .add.big {
  height: 21px;
}

.cond.multi {
  height: 43px;
}

/* project and layers */
.right {
  flex: none;
  display: flex;
  flex-direction: column;
  width: 232px;
  border-left: 6px solid #cecece;
}

.search {
  flex: none;
  display: flex;
  align-items: center;
  gap: 3px;
  height: 19px;
  padding-left: 4px;
  border-bottom: 1px solid #d8d8d8;
}

.search label {
  display: flex;
}

.search input {
  flex: 1;
  padding: 0;
  border: 0;
  background: none;
}

.tree-wrap {
  flex: none;
  display: flex;
  height: 379px;
  overflow: hidden;
}

.tree {
  flex: 1;
  margin: 0;
  padding: 1px 0 0 4px;
  list-style: none;
}

.tree li {
  display: flex;
  align-items: center;
  gap: 4px;
  width: max-content;
  height: 18px;
}

.tree .l1 {
  margin-left: 15px;
}

.tree .l2 {
  margin-left: 42px;
  padding: 0 5px 0 2px;
}

.tree .ic10 {
  color: #444;
}

.tree .active {
  background: #eaeaea;
  outline: 1px solid #ddd;
  outline-offset: -1px;
}

.split {
  flex: none;
  height: 6px;
  background: #cecece;
}

.layer {
  display: flex;
  align-items: center;
  gap: 3px;
  height: 19px;
  padding: 0 9px 0 17px;
  border-bottom: 1px solid #e4e4e4;
}

.layer label {
  flex: 1;
  padding-left: 2px;
}

.layer span {
  color: #777;
}

.alt {
  background: #f0f0f0;
}

.dock-tabs {
  display: flex;
  margin-top: auto;
  background: #fafafa;
}

.dock {
  display: flex;
  align-items: center;
  gap: 4px;
  height: 18px;
  padding: 0 3px 0 5px;
  border: 1px solid #666;
  border-top: 0;
  border-radius: 0 0 7px 7px;
  background: #909090;
}

.dock svg {
  color: #666;
}

.dock.on {
  background: #fff;
}

/* dialogs */
.backdrop {
  position: absolute;
  inset: 0;
  background: rgba(0, 0, 0, 0.25);
}

.about {
  position: absolute;
  left: 307px;
  top: 169px;
  display: flex;
  flex-direction: column;
  width: 463px;
  height: 462px;
  border-radius: 6px;
  background: #fff;
  box-shadow: 0 0 50px rgba(0, 0, 0, 0.35);
}

.about > .dlg {
  border-radius: 6px 6px 0 0;
}

.dlg {
  padding: 0 5px 0 0;
  font-weight: bold;
}

.dlg span {
  flex: 1;
  text-align: center;
}

.about-body {
  flex: 1;
  display: flex;
  justify-content: flex-end;
}

.about-foot {
  display: flex;
  justify-content: flex-end;
  padding: 5px 20px 10px;
}

.btn {
  width: 46px;
  height: 23px;
  padding: 0;
  border: 1px solid #aaa;
  background: linear-gradient(#fafafa, #e2e2e2);
}

.btn.wide {
  width: 56px;
}

.platform {
  position: absolute;
  left: 37px;
  top: 34px;
  width: 396px;
  border: 5px solid #cacaca;
  border-radius: 5px;
  background: #fff;
  box-shadow: 0 0 35px rgba(0, 0, 0, 0.35);
}

.platform .bar {
  background: #2681d0;
}

.platform-body {
  display: flex;
  height: 328px;
  overflow: hidden;
}

.info {
  flex: 1;
  padding-left: 21px;
  color: #3a3a3a;
}

.info b, .info h2 {
  color: #000;
}

.info p {
  margin: 0;
}

.info .scrolled {
  margin-top: -11px;
}

.info h2 {
  margin: 16px 0 4px;
  font-size: 12px;
  line-height: 16px;
}

.info ul {
  margin: 9px 0 0;
  padding-left: 30px;
}

.platform-foot {
  display: flex;
  justify-content: space-between;
  padding: 5px 20px 9px;
}
```
